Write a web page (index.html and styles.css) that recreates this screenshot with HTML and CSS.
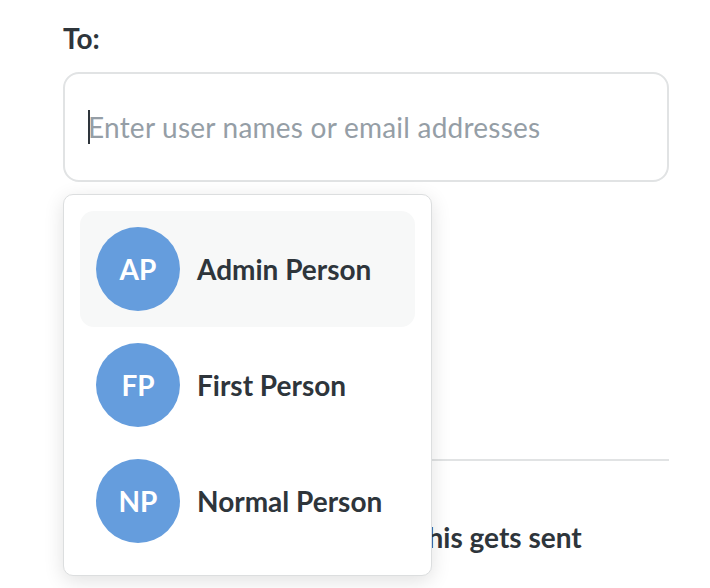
FILE: index.html
```html
<!DOCTYPE html>
<html lang="en">
<head>
<meta charset="utf-8">
<title>Recipients</title>
<link rel="stylesheet" href="styles.css">
</head>
<body>
<div class="page">
  <div class="label">To:</div>
  <div class="field-wrap">
    <div class="input">
      <span class="caret"></span>
      <span class="placeholder">Enter user names or email addresses</span>
    </div>
    <div class="dropdown">
      <div class="item active">
        <div class="avatar">AP</div>
        <div class="name">Admin Person</div>
      </div>
      <div class="item">
        <div class="avatar">FP</div>
        <div class="name">First Person</div>
      </div>
      <div class="item">
        <div class="avatar">NP</div>
        <div class="name">Normal Person</div>
      </div>
    </div>
  </div>
  <div class="divider"></div>
  <div class="option-text">Send me notifications when this gets sent</div>
</div>
</body>
</html>
```
FILE: styles.css
```css
* { box-sizing: border-box; }
html, body { margin: 0; padding: 0; background: #fff; }
body {
  font-family: Lato, "Open Sans", "Liberation Sans", sans-serif;
  color: #2e353b;
  width: 710px;
  height: 588px;
  overflow: hidden;
}
.page {
  padding: 21px 41px 0 63px;
}
.label {
  font-size: 28px;
  line-height: 34px;
  font-weight: 700;
  color: #2e353b;
}
.field-wrap {
  position: relative;
  margin-top: 17px;
}
.input {
  height: 110px;
  border: 2px solid #e1e3e4;
  border-radius: 16px;
  display: flex;
  align-items: center;
  padding-left: 23px;
}
.caret {
  width: 2px;
  height: 34px;
  background: #2e353b;
}
.placeholder {
  font-size: 28px;
  line-height: 34px;
  letter-spacing: 0.23px;
  color: #959ea6;
  margin-left: -2px;
}
.dropdown {
  position: absolute;
  top: 122px;
  left: 0;
  width: 369px;
  background: #fff;
  border: 1px solid #dcdedf;
  border-radius: 10px;
  padding: 16px;
  box-shadow: 0 5px 20px rgba(0, 0, 0, 0.12);
  z-index: 2;
}
.item {
  height: 116px;
  display: flex;
  align-items: center;
  padding-left: 16px;
  gap: 17px;
  border-radius: 14px;
}
.item.active {
  background: #f7f8f8;
}
.avatar {
  width: 84px;
  height: 84px;
  border-radius: 50%;
  background: #659ddd;
  color: #fff;
  font-weight: 700;
  font-size: 28px;
  display: flex;
  align-items: center;
  justify-content: center;
  flex: none;
}
.name {
  font-size: 28px;
  font-weight: 700;
  color: #2e353b;
  line-height: 34px;
}
.divider {
  margin-top: 277px;
  height: 2px;
  background: #e1e3e4;
}
.option-text {
  margin-top: 59px;
  padding-left: 2px;
  font-size: 28px;
  line-height: 34px;
  font-weight: 700;
  color: #2e353b;
}
```
